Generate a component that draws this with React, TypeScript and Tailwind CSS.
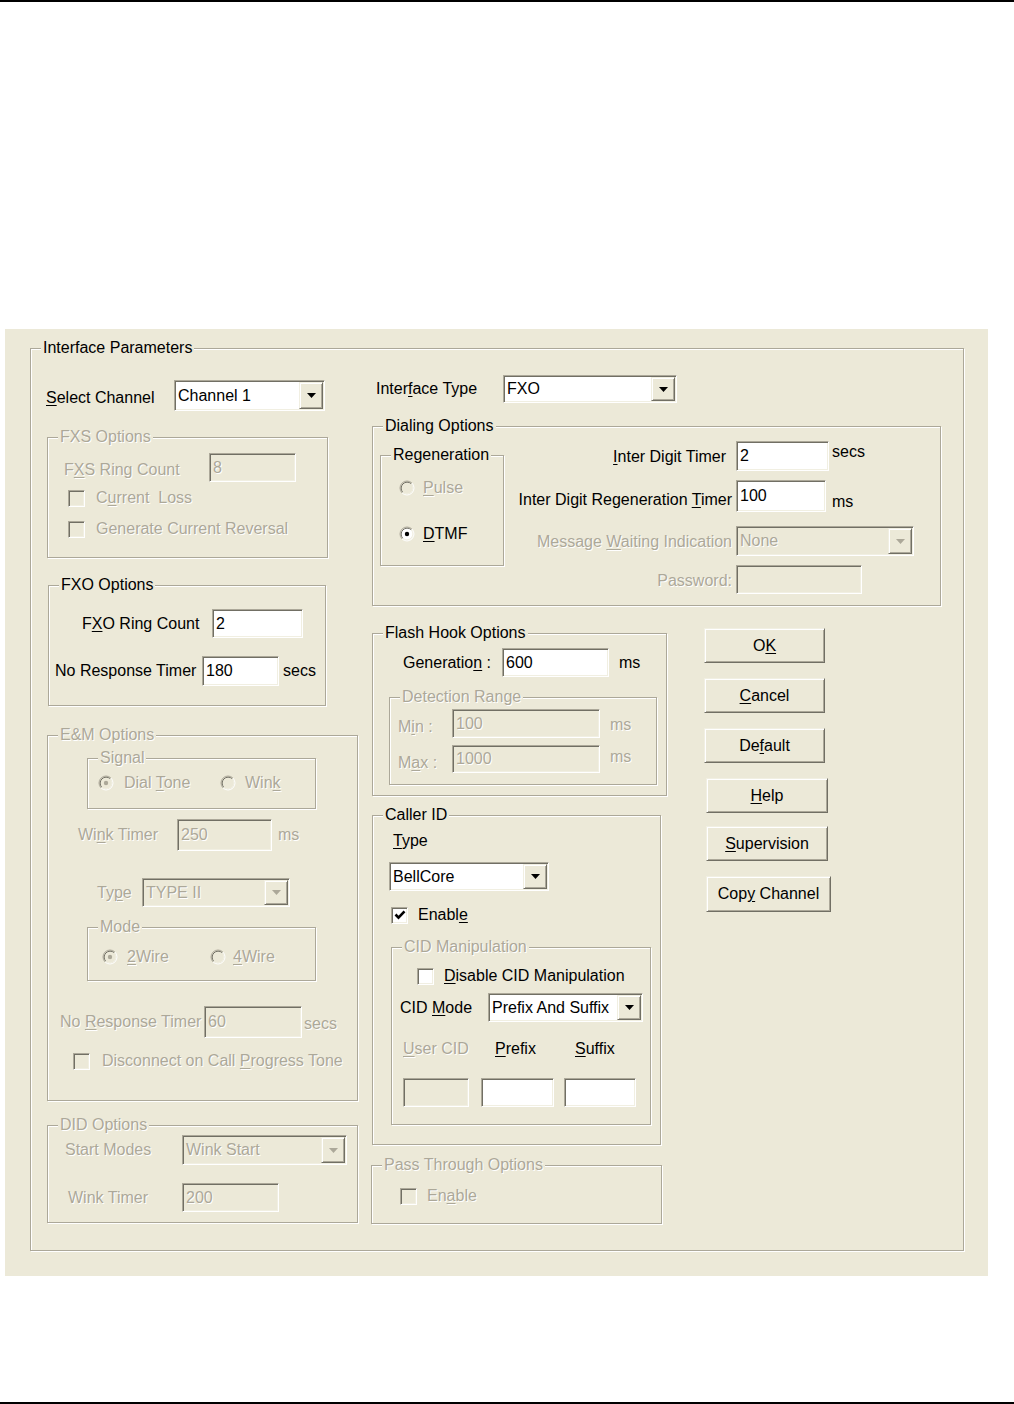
import React from 'react';

const DIS = 'text-[#ACA899] [text-shadow:1px_1px_0_#fff]';
const SUNKEN =
  'border border-t-[#ACA899] border-l-[#ACA899] border-b-white border-r-white [box-shadow:inset_1px_1px_0_#716F64,inset_-1px_-1px_0_#F1EFE2]';
const RAISED =
  'border border-t-[#F1EFE2] border-l-[#F1EFE2] border-b-[#716F64] border-r-[#716F64] [box-shadow:inset_1px_1px_0_#fff,inset_-1px_-1px_0_#ACA899]';

function Mn({ t, i }: { t: string; i?: number }) {
  if (i === undefined) return <>{t}</>;
  return (
    <>
      {t.slice(0, i)}
      <span className="underline decoration-1 underline-offset-2">{t[i]}</span>
      {t.slice(i + 1)}
    </>
  );
}

function Group({
  title,
  dis,
  className = '',
  children,
}: {
  title: React.ReactNode;
  dis?: boolean;
  className?: string;
  children?: React.ReactNode;
}) {
  return (
    <div
      className={`relative shrink-0 border border-[#ACA899] [box-shadow:inset_1px_1px_0_#fff,1px_1px_0_#fff] ${className}`}
    >
      <span
        className={`absolute -top-[10px] left-[10px] px-[2px] bg-[#ECE9D8] whitespace-nowrap leading-[18px] ${
          dis ? DIS : 'text-black'
        }`}
      >
        {title}
      </span>
      {children}
    </div>
  );
}

function Edit({ v = '', dis, className = '' }: { v?: string; dis?: boolean; className?: string }) {
  return (
    <div
      className={`flex shrink-0 items-center pl-[3px] whitespace-nowrap ${SUNKEN} ${
        dis ? 'bg-[#ECE9D8] text-[#ACA899] [text-shadow:1px_1px_0_#fff]' : 'bg-white text-black'
      } ${className}`}
    >
      {v}
    </div>
  );
}

function Combo({ v, dis, className = '' }: { v: string; dis?: boolean; className?: string }) {
  return (
    <div className={`flex shrink-0 ${SUNKEN} ${dis ? 'bg-[#ECE9D8]' : 'bg-white'} ${className}`}>
      <span className={`flex-1 flex items-center pl-[3px] whitespace-nowrap overflow-hidden ${dis ? DIS : 'text-black'}`}>
        {v}
      </span>
      <span className={`m-[1px] w-[24px] shrink-0 flex items-center justify-center bg-[#ECE9D8] ${RAISED}`}>
        <svg width="9" height="5" viewBox="0 0 9 5" className="block">
          <path d="M0 0H9L4.5 5Z" fill={dis ? '#ACA899' : '#000'} />
        </svg>
      </span>
    </div>
  );
}

function Btn({ children, className = '' }: { children: React.ReactNode; className?: string }) {
  return (
    <div className={`flex shrink-0 items-center justify-center bg-[#ECE9D8] text-black whitespace-nowrap ${RAISED} ${className}`}>
      <span className="whitespace-pre">{children}</span>
    </div>
  );
}

function Check({ on, dis }: { on?: boolean; dis?: boolean }) {
  return (
    <span
      className={`flex shrink-0 w-[17px] h-[17px] items-center justify-center ${SUNKEN} ${
        dis ? 'bg-[#ECE9D8]' : 'bg-white'
      }`}
    >
      {on && (
        <svg width="12" height="12" viewBox="0 0 12 12" className="block">
          <path d="M1.5 5.5 L4.5 8.6 L10.5 2.4" stroke="#000" strokeWidth="2.6" fill="none" />
        </svg>
      )}
    </span>
  );
}

function Radio({ on, dis }: { on?: boolean; dis?: boolean }) {
  return (
    <svg width="16" height="16" viewBox="0 0 16 16" className="block shrink-0">
      <circle cx="8" cy="8" r="6.5" fill={dis ? '#ECE9D8' : '#fff'} />
      <path d="M3.05 12.95 A7 7 0 0 1 12.95 3.05" stroke="#ACA899" fill="none" />
      <path d="M12.95 3.05 A7 7 0 0 1 3.05 12.95" stroke="#fff" fill="none" />
      <path d="M3.76 12.24 A6 6 0 0 1 12.24 3.76" stroke="#716F64" fill="none" />
      <path d="M12.24 3.76 A6 6 0 0 1 3.76 12.24" stroke="#F1EFE2" fill="none" />
      {on && <circle cx="8" cy="8" r="2.2" fill={dis ? '#ACA899' : '#000'} />}
    </svg>
  );
}

export default function App() {
  return (
    <div className="w-[1014px] h-[1404px] bg-white flex flex-col text-[16px] leading-[18px] text-black [font-family:'Liberation_Sans',Arial,sans-serif]">
      <div className="h-[2px] bg-black shrink-0" />
      <div className="mt-[327px] ml-[5px] w-[983px] h-[947px] shrink-0 bg-[#ECE9D8] pt-[19px] pl-[25px]">
        <Group title="Interface Parameters" className="w-[934px] h-[903px] flex items-start">
          {/* Left column */}
          <div className="ml-[16px] w-[311px] flex flex-col items-start">
            <div className="mt-[31px] flex items-center h-[31px]">
              <span className="w-[128px] -ml-[1px] pt-[5px] whitespace-nowrap">
                <Mn t="Select Channel" i={0} />
              </span>
              <Combo v="Channel 1" className="w-[151px] h-[31px]" />
            </div>

            <Group title="FXS Options" dis className="mt-[26px] w-[281px] h-[121px]">
              <div className="mt-[15px] ml-[16px] flex items-start">
                <span className={`w-[145px] mt-[8px] whitespace-nowrap ${DIS}`}>
                  <Mn t="FXS Ring Count" i={1} />
                </span>
                <Edit v="8" dis className="w-[87px] h-[29px]" />
              </div>
              <div className="mt-[7px] ml-[20px] flex items-center">
                <Check dis />
                <span className={`ml-[11px] whitespace-nowrap ${DIS}`}>
                  <Mn t={'Current\u00a0 Loss'} i={1} />
                </span>
              </div>
              <div className="mt-[13px] ml-[20px] flex items-center">
                <Check dis />
                <span className={`ml-[11px] whitespace-nowrap ${DIS}`}>Generate Current Reversal</span>
              </div>
            </Group>

            <Group title="FXO Options" className="mt-[27px] ml-[1px] w-[278px] h-[121px]">
              <div className="mt-[23px] ml-[33px] flex items-center">
                <span className="w-[130px] whitespace-nowrap">
                  <Mn t="FXO Ring Count" i={1} />
                </span>
                <Edit v="2" className="w-[91px] h-[29px]" />
              </div>
              <div className="mt-[18px] ml-[6px] flex items-center">
                <span className="w-[147px] whitespace-nowrap">No Response Timer</span>
                <Edit v="180" className="w-[77px] h-[30px]" />
                <span className="ml-[4px]">secs</span>
              </div>
            </Group>

            <Group title="E&M Options" dis className="mt-[29px] w-[311px] h-[366px]">
              <Group title="Signal" dis className="mt-[22px] ml-[39px] w-[229px] h-[51px]">
                <div className="mt-[16px] ml-[10px] flex items-center h-[16px]">
                  <span className="w-[122px] flex items-center">
                    <Radio on dis />
                    <span className={`ml-[10px] whitespace-nowrap ${DIS}`}>
                      <Mn t="Dial Tone" i={5} />
                    </span>
                  </span>
                  <Radio dis />
                  <span className={`ml-[9px] ${DIS}`}>
                    <Mn t="Wink" i={3} />
                  </span>
                </div>
              </Group>
              <div className="mt-[10px] ml-[30px] flex items-center">
                <span className={`w-[99px] whitespace-nowrap ${DIS}`}>
                  <Mn t="Wink Timer" i={2} />
                </span>
                <Edit v="250" dis className="w-[95px] h-[32px]" />
                <span className={`ml-[6px] ${DIS}`}>ms</span>
              </div>
              <div className="mt-[27px] ml-[49px] flex items-center">
                <span className={`w-[45px] ${DIS}`}>
                  <Mn t="Type" i={2} />
                </span>
                <Combo v="TYPE II" dis className="w-[148px] h-[29px]" />
              </div>
              <Group title="Mode" dis className="mt-[20px] ml-[39px] w-[229px] h-[54px]">
                <div className="mt-[21px] ml-[14px] flex items-center h-[16px]">
                  <span className="w-[108px] flex items-center">
                    <Radio on dis />
                    <span className={`ml-[9px] ${DIS}`}>
                      <Mn t="2Wire" i={0} />
                    </span>
                  </span>
                  <Radio dis />
                  <span className={`ml-[7px] ${DIS}`}>
                    <Mn t="4Wire" i={0} />
                  </span>
                </div>
              </Group>
              <div className="mt-[25px] ml-[12px] flex items-center">
                <span className={`w-[144px] whitespace-nowrap ${DIS}`}>
                  <Mn t="No Response Timer" i={3} />
                </span>
                <Edit v="60" dis className="w-[98px] h-[32px]" />
                <span className={`ml-[2px] mt-[4px] ${DIS}`}>secs</span>
              </div>
              <div className="mt-[14px] ml-[25px] flex items-center">
                <Check dis />
                <span className={`ml-[12px] whitespace-nowrap ${DIS}`}>
                  <Mn t="Disconnect on Call Progress Tone" i={19} />
                </span>
              </div>
            </Group>

            <Group title="DID Options" dis className="mt-[24px] w-[311px] h-[98px]">
              <div className="mt-[9px] ml-[17px] flex items-center">
                <span className={`w-[117px] whitespace-nowrap ${DIS}`}>Start Modes</span>
                <Combo v="Wink Start" dis className="w-[165px] h-[30px]" />
              </div>
              <div className="mt-[18px] ml-[20px] flex items-center">
                <span className={`w-[114px] whitespace-nowrap ${DIS}`}>Wink Timer</span>
                <Edit v="200" dis className="w-[97px] h-[29px]" />
              </div>
            </Group>
          </div>

          {/* Right area */}
          <div className="ml-[13px] flex flex-col items-start">
            <div className="mt-[26px] ml-[5px] flex items-center">
              <span className="w-[127px] whitespace-nowrap">
                <Mn t="Interface Type" i={5} />
              </span>
              <Combo v="FXO" className="w-[174px] h-[28px]" />
            </div>

            <Group title="Dialing Options" className="mt-[23px] ml-[1px] w-[569px] h-[180px] flex items-start">
              <Group title="Regeneration" className="mt-[28px] ml-[7px] w-[124px] h-[111px]">
                <div className="mt-[23px] ml-[18px] flex items-center h-[18px]">
                  <Radio dis />
                  <span className={`ml-[8px] ${DIS}`}>
                    <Mn t="Pulse" i={0} />
                  </span>
                </div>
                <div className="mt-[28px] ml-[18px] flex items-center h-[18px]">
                  <Radio on />
                  <span className="ml-[8px]">
                    <Mn t="DTMF" i={0} />
                  </span>
                </div>
              </Group>
              <div className="mt-[14px] flex flex-col">
                <div className="flex items-start">
                  <span className="w-[228px] text-right pr-[6px] mt-[7px] whitespace-nowrap">
                    <Mn t="Inter Digit Timer" i={0} />
                  </span>
                  <Edit v="2" className="ml-[4px] w-[93px] h-[30px]" />
                  <span className="ml-[3px] mt-[2px]">secs</span>
                </div>
                <div className="mt-[9px] flex items-start">
                  <span className="w-[228px] text-right mt-[11px] whitespace-nowrap">
                    <Mn t="Inter Digit Regeneration Timer" i={25} />
                  </span>
                  <Edit v="100" className="ml-[4px] w-[90px] h-[32px]" />
                  <span className="ml-[6px] mt-[13px]">ms</span>
                </div>
                <div className="mt-[14px] flex items-start">
                  <span className={`w-[228px] text-right mt-[7px] whitespace-nowrap ${DIS}`}>
                    <Mn t="Message Waiting Indication" i={8} />
                  </span>
                  <Combo v="None" dis className="ml-[4px] w-[178px] h-[30px]" />
                </div>
                <div className="mt-[9px] flex items-start">
                  <span className={`w-[228px] text-right mt-[7px] ${DIS}`}>Password:</span>
                  <Edit dis className="ml-[4px] w-[126px] h-[29px]" />
                </div>
              </div>
            </Group>

            <div className="flex items-start">
              <div className="w-[296px] flex flex-col items-start">
                <Group title="Flash Hook Options" className="mt-[27px] ml-[1px] w-[295px] h-[163px]">
                  <div className="mt-[14px] ml-[30px] flex items-center">
                    <span className="w-[99px] whitespace-nowrap">
                      <Mn t="Generation :" i={9} />
                    </span>
                    <Edit v="600" className="w-[107px] h-[29px]" />
                    <span className="ml-[10px]">ms</span>
                  </div>
                  <Group title="Detection Range" dis className="mt-[20px] ml-[16px] w-[268px] h-[88px]">
                    <div className="mt-[11px] ml-[8px] flex items-start">
                      <span className={`w-[54px] mt-[9px] whitespace-nowrap ${DIS}`}>
                        <Mn t="Min :" i={1} />
                      </span>
                      <Edit v="100" dis className="w-[148px] h-[29px]" />
                      <span className={`ml-[10px] mt-[7px] ${DIS}`}>ms</span>
                    </div>
                    <div className="mt-[7px] ml-[8px] flex items-start">
                      <span className={`w-[54px] mt-[9px] whitespace-nowrap ${DIS}`}>
                        <Mn t="Max :" i={1} />
                      </span>
                      <Edit v="1000" dis className="w-[148px] h-[28px]" />
                      <span className={`ml-[10px] mt-[3px] ${DIS}`}>ms</span>
                    </div>
                  </Group>
                </Group>

                <Group title="Caller ID" className="mt-[19px] ml-[1px] w-[289px] h-[330px]">
                  <div className="mt-[16px] ml-[20px]">
                    <Mn t="Type" i={0} />
                  </div>
                  <Combo v="BellCore" className="mt-[12px] ml-[16px] w-[160px] h-[29px]" />
                  <div className="mt-[15px] ml-[18px] flex items-center">
                    <Check on />
                    <span className="ml-[10px]">
                      <Mn t="Enable" i={5} />
                    </span>
                  </div>
                  <Group title="CID Manipulation" dis className="mt-[23px] ml-[18px] w-[260px] h-[178px]">
                    <div className="mt-[19px] ml-[25px] flex items-center">
                      <Check />
                      <span className="ml-[10px] whitespace-nowrap">
                        <Mn t="Disable CID Manipulation" i={0} />
                      </span>
                    </div>
                    <div className="mt-[8px] ml-[8px] flex items-center">
                      <span className="w-[88px] whitespace-nowrap">
                        <Mn t="CID Mode" i={4} />
                      </span>
                      <Combo v="Prefix And Suffix" className="w-[155px] h-[29px]" />
                    </div>
                    <div className="mt-[18px] ml-[11px] flex">
                      <span className={`w-[92px] whitespace-nowrap ${DIS}`}>
                        <Mn t="User CID" i={0} />
                      </span>
                      <span className="w-[80px]">
                        <Mn t="Prefix" i={0} />
                      </span>
                      <span>
                        <Mn t="Suffix" i={0} />
                      </span>
                    </div>
                    <div className="mt-[20px] ml-[11px] flex">
                      <Edit dis className="w-[66px] h-[29px]" />
                      <Edit className="ml-[12px] w-[73px] h-[29px]" />
                      <Edit className="ml-[10px] w-[72px] h-[29px]" />
                    </div>
                  </Group>
                </Group>

                <Group title="Pass Through Options" dis className="mt-[20px] w-[291px] h-[59px]">
                  <div className="mt-[21px] ml-[28px] flex items-center">
                    <Check dis />
                    <span className={`ml-[10px] ${DIS}`}>
                      <Mn t="Enable" i={2} />
                    </span>
                  </div>
                </Group>
              </div>

              <div className="ml-[37px] mt-[22px] flex flex-col items-start">
                <Btn className="w-[121px] h-[35px]">
                  <Mn t="OK" i={1} />
                </Btn>
                <Btn className="mt-[15px] w-[121px] h-[35px]">
                  <Mn t="Cancel" i={0} />
                </Btn>
                <Btn className="mt-[15px] w-[121px] h-[35px]">
                  <Mn t="Default" i={2} />
                </Btn>
                <Btn className="mt-[15px] ml-[2px] w-[122px] h-[35px]">
                  <Mn t="Help" i={0} />
                </Btn>
                <Btn className="mt-[13px] ml-[2px] w-[122px] h-[35px]">
                  <Mn t="Supervision" i={0} />
                </Btn>
                <Btn className="mt-[15px] ml-[2px] w-[125px] h-[36px]">
                  <Mn t="Copy Channel" i={3} />
                </Btn>
              </div>
            </div>
          </div>
        </Group>
      </div>
      <div className="mt-[126px] h-[2px] bg-black shrink-0" />
    </div>
  );
}
